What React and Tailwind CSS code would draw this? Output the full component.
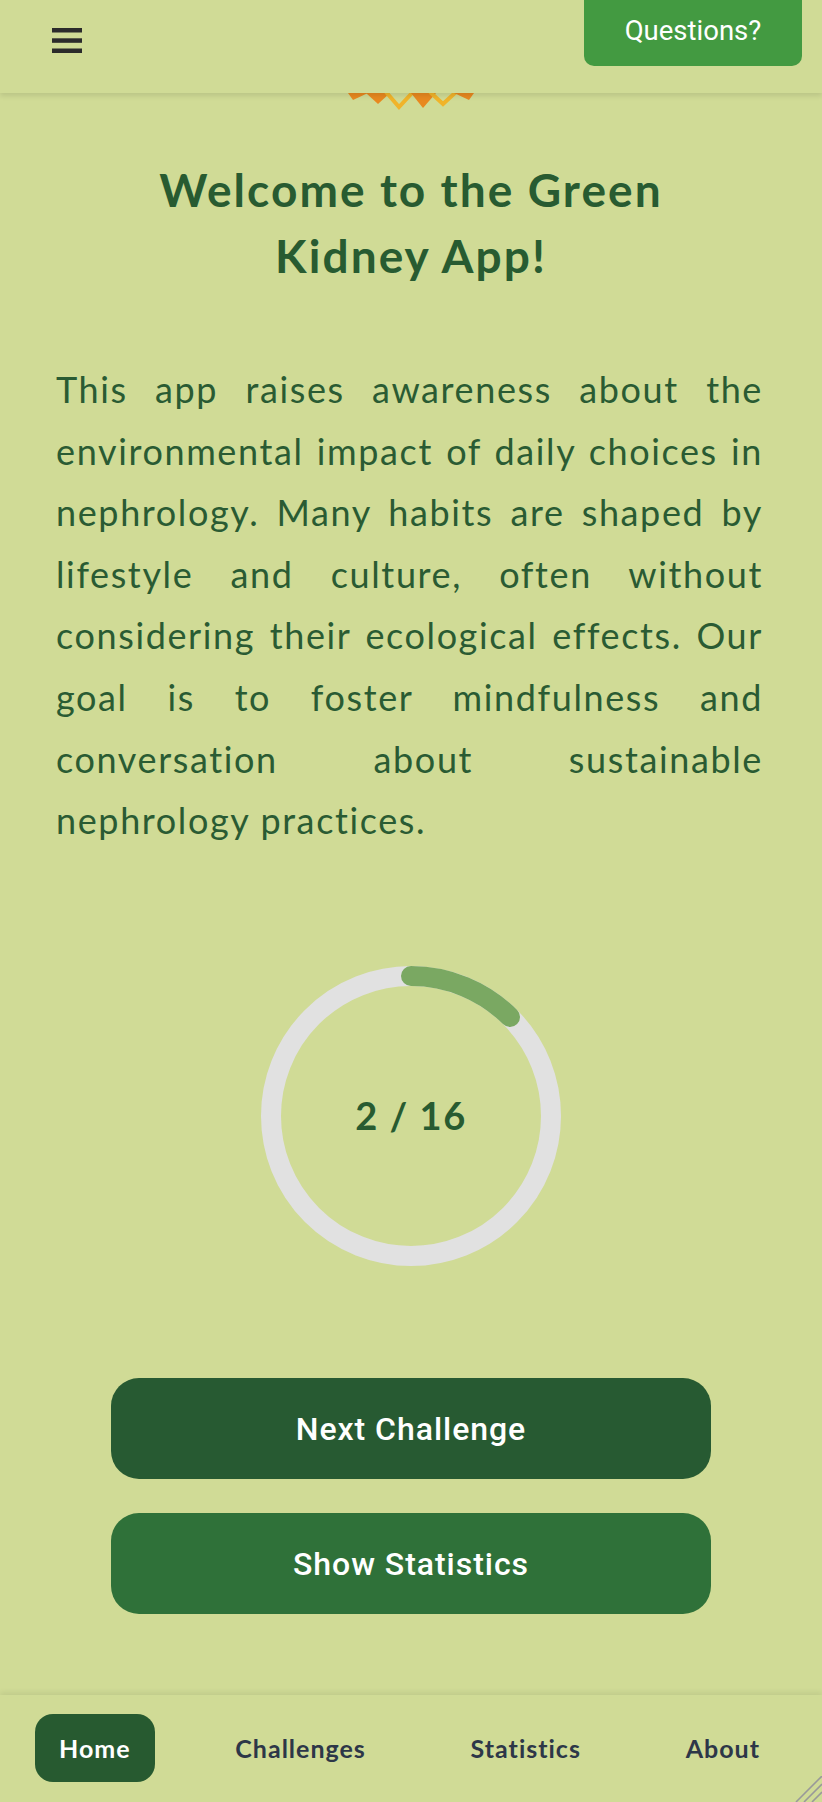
import React from "react";

const lines = [
  "This app raises awareness about the",
  "environmental impact of daily choices in",
  "nephrology. Many habits are shaped by",
  "lifestyle and culture, often without",
  "considering their ecological effects. Our",
  "goal is to foster mindfulness and",
  "conversation about sustainable",
];

function Logo() {
  return (
    <svg width="130" height="17" viewBox="0 0 130 17" className="block">
      <polygon points="2,0 22,0 7,7" fill="#e8891f" />
      <polygon points="20,0 44,0 32,11" fill="#e8891f" />
      <polyline points="40,-1 53,14 67,-1" fill="none" stroke="#f0b42a" strokeWidth="4" />
      <polygon points="65,0 90,0 77,15" fill="#e8891f" />
      <polyline points="84,-1 97,11 110,-1" fill="none" stroke="#f0b42a" strokeWidth="4" />
      <polygon points="108,0 128,0 123,7" fill="#e8891f" />
    </svg>
  );
}

function Progress() {
  const r = 140;
  const c = 2 * Math.PI * r;
  const frac = 2 / 16;
  return (
    <div className="relative w-[300px] h-[300px]">
      <svg width="300" height="300" viewBox="0 0 300 300" className="block">
        <circle cx="150" cy="150" r={r} fill="none" stroke="#e1e1e1" strokeWidth="20" />
        <circle
          cx="150"
          cy="150"
          r={r}
          fill="none"
          stroke="#7aa862"
          strokeWidth="20"
          strokeLinecap="round"
          strokeDasharray={`${c * frac} ${c}`}
          transform="rotate(-90 150 150)"
        />
      </svg>
      <div className="absolute inset-0 flex items-center justify-center font-['Lato',sans-serif] font-bold text-[38px] tracking-[0.04em] text-[#285b31]">
        2 / 16
      </div>
    </div>
  );
}

export default function App() {
  return (
    <div className="w-[822px] min-h-[1802px] bg-[#d0db96] flex flex-col font-['Lato',sans-serif]">
      <header className="relative z-10 h-[93px] shrink-0 flex justify-between items-start bg-[#d0db96] shadow-[0_3px_5px_rgba(0,0,0,0.1)]">
        <svg width="30" height="25" viewBox="0 0 30 25" className="ml-[52px] mt-[28px]">
          <rect x="0" y="0" width="30" height="4.5" fill="#2b2b2b" />
          <rect x="0" y="10.3" width="30" height="4.5" fill="#2b2b2b" />
          <rect x="0" y="20.5" width="30" height="4.5" fill="#2b2b2b" />
        </svg>
        <button className="mr-[20px] w-[218px] h-[66px] bg-[#439a41] rounded-b-[10px] text-white font-['Roboto',sans-serif] text-[27.5px] pb-[4px] flex items-center justify-center">
          Questions?
        </button>
      </header>

      <div className="flex justify-center">
        <Logo />
      </div>

      <h1 className="mt-[47px] text-center font-bold text-[46px] leading-[66px] tracking-[0.045em] text-[#285b31]">
        Welcome to the Green
        <br />
        Kidney App!
      </h1>

      <p className="mt-[70px] pl-[56px] pr-[59px] text-[36px] leading-[61.6px] tracking-[0.045em] text-[#2a5b33]">
        {lines.map((l) => (
          <span key={l} className="block text-justify [text-align-last:justify]">
            {l}
          </span>
        ))}
        <span className="block">nephrology practices.</span>
      </p>

      <div className="mt-[114px] flex justify-center">
        <Progress />
      </div>

      <div className="mt-[112px] flex flex-col items-center gap-[34px] font-['Roboto',sans-serif]">
        <button className="w-[600px] h-[101px] rounded-[28px] bg-[#275a32] text-white text-[32px] tracking-[0.03em] font-medium pt-[2px]">
          Next Challenge
        </button>
        <button className="w-[600px] h-[101px] rounded-[28px] bg-[#2f7139] text-white text-[32px] tracking-[0.03em] font-medium pt-[2px]">
          Show Statistics
        </button>
      </div>

      <nav className="relative mt-[81px] h-[107px] shrink-0 flex items-center justify-between pl-[35px] pr-[38px] bg-[#d0db96] shadow-[0_-3px_5px_rgba(0,0,0,0.07)] text-[25px] font-bold tracking-[0.04em]">
        <a className="h-[68px] px-[24px] rounded-[18px] bg-[#275a30] text-white flex items-center">Home</a>
        <a className="h-[68px] px-[24px] flex items-center text-[#2d3748]">Challenges</a>
        <a className="h-[68px] px-[24px] flex items-center text-[#2d3748]">Statistics</a>
        <a className="h-[68px] px-[24px] flex items-center text-[#2d3748]">About</a>
        <svg width="28" height="26" viewBox="0 0 28 26" className="absolute right-0 bottom-0">
          <line x1="2" y1="26" x2="28" y2="0" stroke="#999" strokeWidth="1.6" />
          <line x1="10" y1="26" x2="28" y2="8" stroke="#999" strokeWidth="1.6" />
          <line x1="18" y1="26" x2="28" y2="16" stroke="#999" strokeWidth="1.6" />
        </svg>
      </nav>
    </div>
  );
}
